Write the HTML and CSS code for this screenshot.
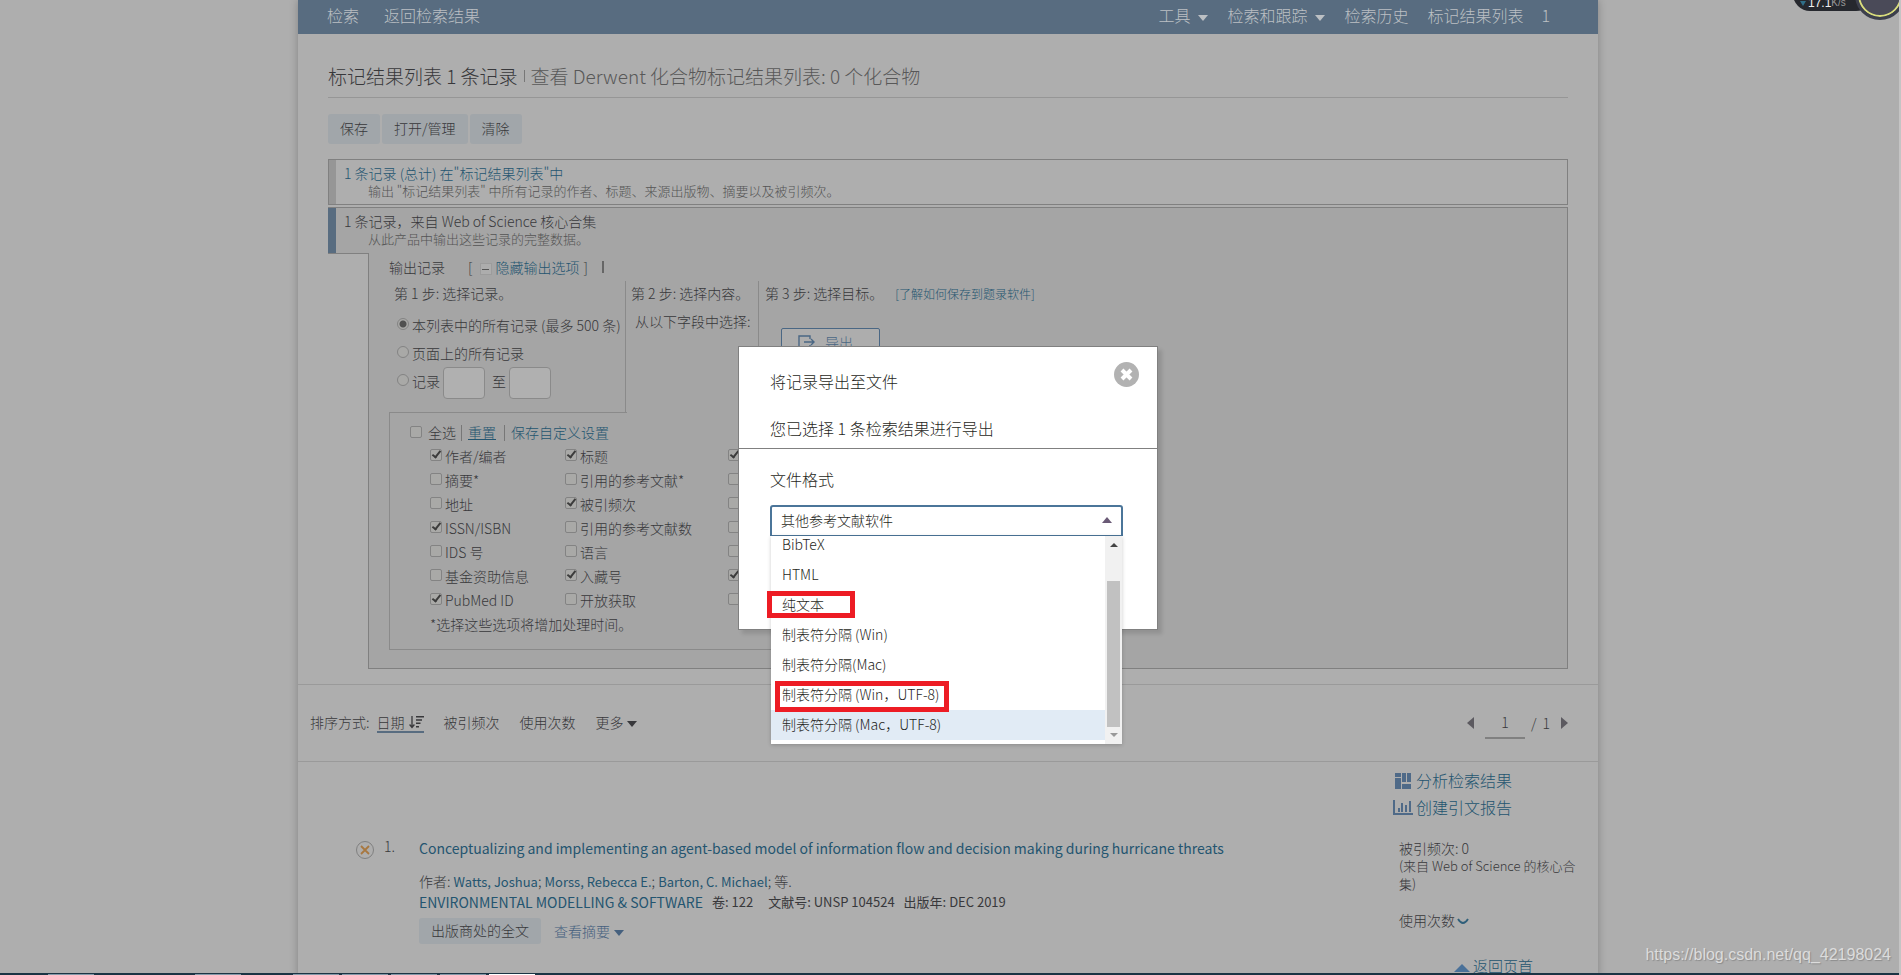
FILE: index.html
```html
<!DOCTYPE html>
<html lang="zh-CN">
<head>
<meta charset="utf-8">
<title>标记结果列表</title>
<link rel="stylesheet" href="styles.css">
</head>
<body>
<div class="viewport">
  <div class="page">
    <nav class="navbar">
      <div class="nav-left"><a href="#">检索</a><a href="#">返回检索结果</a></div>
      <div class="nav-right">
        <a href="#">工具<i class="caret"></i></a>
        <a href="#">检索和跟踪<i class="caret"></i></a>
        <a href="#">检索历史</a>
        <a href="#">标记结果列表<span class="count">1</span></a>
      </div>
    </nav>

    <main class="content">
      <h1 class="title"><span>标记结果列表 1 条记录</span><i class="bar"></i><a href="#">查看 Derwent 化合物标记结果列表: 0 个化合物</a></h1>
      <div class="actions">
        <button class="btn" type="button">保存</button>
        <button class="btn" type="button">打开/管理</button>
        <button class="btn" type="button">清除</button>
      </div>

      <section class="summary">
        <a href="#" class="summary-title">1 条记录 (总计) 在"标记结果列表"中</a>
        <p class="summary-note">输出 "标记结果列表" 中所有记录的作者、标题、来源出版物、摘要以及被引频次。</p>
      </section>

      <section class="source">
        <header class="source-head">
          <h2 class="summary-title">1 条记录，来自 Web of Science 核心合集</h2>
          <p class="summary-note">从此产品中输出这些记录的完整数据。</p>
        </header>
        <div class="source-row">
          <div class="notch"></div>
          <div class="output">
            <div class="output-head"><span>输出记录</span><span class="toggle">[ <i class="minus"></i><a href="#">隐藏输出选项</a> ]</span><i class="bar"></i></div>
            <div class="steps">
              <div class="step step-one">
                <h3>第 1 步: 选择记录。</h3>
                <label class="radio"><input type="radio" name="range" checked>本列表中的所有记录 (最多 500 条)</label>
                <label class="radio"><input type="radio" name="range">页面上的所有记录</label>
                <div class="radio"><input type="radio" name="range" id="range"><label for="range">记录</label><input class="num" type="text" aria-label="起始记录"><span class="to">至</span><input class="num" type="text" aria-label="结束记录"></div>
              </div>
              <div class="step step-two">
                <h3>第 2 步: 选择内容。</h3>
                <p>从以下字段中选择:</p>
              </div>
              <div class="step step-three">
                <h3>第 3 步: 选择目标。<a href="#">[了解如何保存到题录软件]</a></h3>
                <button class="export" type="button"><svg width="18" height="14" viewBox="0 0 18 14" fill="none" stroke="currentColor" stroke-width="1.4"><path d="M12 4V1H1v12h11v-3M6 7h10M13 4l3 3-3 3"/></svg>导出</button>
              </div>
            </div>
            <div class="fields">
              <div class="fields-head"><label><input type="checkbox">全选</label><a class="u" href="#">重置</a><a href="#">保存自定义设置</a></div>
              <div class="field-grid">
                <label><input type="checkbox" checked>作者/编者</label><label><input type="checkbox" checked>标题</label><input type="checkbox" checked aria-label="来源出版物">
                <label><input type="checkbox">摘要*</label><label><input type="checkbox">引用的参考文献*</label><input type="checkbox" aria-label="来源出版物缩写">
                <label><input type="checkbox">地址</label><label><input type="checkbox" checked>被引频次</label><input type="checkbox" aria-label="文献类型">
                <label><input type="checkbox" checked>ISSN/ISBN</label><label><input type="checkbox">引用的参考文献数</label><input type="checkbox" aria-label="关键词">
                <label><input type="checkbox">IDS 号</label><label><input type="checkbox">语言</label><input type="checkbox" aria-label="出版商信息">
                <label><input type="checkbox">基金资助信息</label><label><input type="checkbox" checked>入藏号</label><input type="checkbox" checked aria-label="会议信息">
                <label><input type="checkbox" checked>PubMed ID</label><label><input type="checkbox">开放获取</label><input type="checkbox" aria-label="研究方向">
              </div>
              <p class="fields-note">*选择这些选项将增加处理时间。</p>
            </div>
          </div>
        </div>
      </section>
    </main>

    <div class="sortbar">
      <div class="sort">
        <span class="sort-label">排序方式:</span>
        <a href="#" class="active">日期<svg width="15" height="13" viewBox="0 0 15 13"><path d="M3 0v11M0.600 8.500L3 11.500 5.400 8.500" fill="none" stroke="currentColor" stroke-width="1.300"/><path d="M7 0h8v1.500H7zM7 3.300h6v1.500H7zM7 6.600h4.500v1.500H7zM7 10h3v1.500H7z" fill="currentColor"/></svg></a>
        <a href="#">被引频次</a><a href="#">使用次数</a><a href="#">更多<i class="caret"></i></a>
      </div>
      <div class="pager">
        <button type="button" aria-label="上一页" class="prev"></button>
        <input type="text" value="1" aria-label="页码"><span>/</span><span>1</span>
        <button type="button" aria-label="下一页" class="next"></button>
      </div>
    </div>

    <div class="results">
      <article class="record">
        <button class="remove" type="button" aria-label="移除"><svg width="10" height="10" viewBox="0 0 10 10" stroke="currentColor" stroke-width="1.800"><path d="M1 1l8 8M9 1l-8 8"/></svg></button>
        <span class="num-label">1.</span>
        <div class="record-body">
          <a href="#" class="record-title">Conceptualizing and implementing an agent-based model of information flow and decision making during hurricane threats</a>
          <p class="authors">作者: <a href="#">Watts, Joshua</a>; <a href="#">Morss, Rebecca E.</a>; <a href="#">Barton, C. Michael</a>; 等.</p>
          <p class="journal"><a href="#">ENVIRONMENTAL MODELLING &amp; SOFTWARE</a><span>卷: 122</span><span class="wide">文献号: UNSP 104524</span><span>出版年: DEC 2019</span></p>
          <div class="record-actions"><button class="btn fulltext" type="button">出版商处的全文</button><a href="#">查看摘要<i class="caret"></i></a></div>
        </div>
      </article>
      <aside class="side">
        <a href="#" class="tool"><svg width="22" height="16" viewBox="0 0 22 16" fill="currentColor"><path d="M3 0h6v4H3zM3 5h6v11H3zM10 0h4v9h-4zM15 0h4v9h-4zM10 11h9v5h-9z"/></svg>分析检索结果</a>
        <a href="#" class="tool"><svg width="22" height="16" viewBox="0 0 22 16" fill="currentColor"><path d="M1 0h2v13h18v2H1zM6 8h2v4H6zM9 3h2v9H9zM13 5h2v7h-2zM17 1h2v11h-2z"/></svg>创建引文报告</a>
        <div class="cites">
          <p>被引频次: 0</p>
          <p class="from">(来自 Web of Science 的核心合集)</p>
          <a href="#" class="usage">使用次数<svg width="12" height="7" viewBox="0 0 12 7" fill="none" stroke="currentColor" stroke-width="1.800"><path d="M1 1q5 8 10 0"/></svg></a>
        </div>
        <a href="#" class="top"><i></i>返回页首</a>
      </aside>
    </div>
  </div>

  <div class="overlay">
    <div class="modal" role="dialog" aria-labelledby="dlg">
      <header class="modal-head">
        <h2 id="dlg">将记录导出至文件</h2>
        <p>您已选择 1 条检索结果进行导出</p>
        <button class="close" type="button" aria-label="关闭"><svg width="13" height="13" viewBox="0 0 13 13" stroke="#fff" stroke-width="4"><path d="M2 2l9 9M11 2l-9 9"/></svg></button>
      </header>
      <div class="modal-body">
        <h3>文件格式</h3>
        <div class="picker">
          <button class="picked" type="button" aria-haspopup="listbox">其他参考文献软件<i class="caret up"></i></button>
          <div class="menu">
            <ul role="listbox">
              <li role="option">BibTeX</li>
              <li role="option">HTML</li>
              <li role="option" class="mark-a">纯文本</li>
              <li role="option">制表符分隔 (Win)</li>
              <li role="option">制表符分隔(Mac)</li>
              <li role="option" class="mark-b">制表符分隔 (Win，UTF-8)</li>
              <li role="option" class="hover">制表符分隔 (Mac，UTF-8)</li>
            </ul>
            <div class="scroll"><i class="arrow-up"></i><i class="thumb"></i><i class="arrow-down"></i></div>
          </div>
        </div>
      </div>
    </div>
  </div>

  <div class="gadget">
    <div class="speed"><i></i>17.1<small>K/s</small></div>
    <div class="dial"></div>
  </div>
  <div class="watermark">https://blog.csdn.net/qq_42198024</div>
  <div class="taskbar"><i style="left:48px"></i><i style="left:195px"></i><i style="left:293px"></i><i style="left:342px"></i><i style="left:391px"></i><i style="left:440px"></i><i class="on" style="left:489px"></i></div>
</div>
</body>
</html>
```

FILE: styles.css
```css
*, *::before, *::after { box-sizing: border-box; }
body, h1, h2, h3, p, ul { margin: 0; padding: 0; font-weight: inherit; }
ul { list-style: none; }
body {
  font: 300 14px/20px "Noto Sans CJK SC", sans-serif;
  color: #38383b;
  background: #aeaeae;
}
a { color: #245570; text-decoration: none; }
button, input { font: inherit; color: inherit; margin: 0; }
button { border: 0; background: none; padding: 0; }
.viewport {
  position: relative;
  height: 100vh;
  overflow: hidden;
  padding-right: 3px;
  border-right: 2px solid #c4c4c4;
}
.page {
  max-width: 1300px;
  margin: 0 auto;
  min-height: 100%;
  box-shadow: 0 0 8px rgba(0, 0, 0, .25);
}

.caret {
  display: inline-block;
  border: 5px solid transparent;
  border-top: 6px solid currentColor;
  border-bottom: 0;
  margin-left: 3px;
  vertical-align: 1px;
}
.caret.up { border-top: 0; border-bottom: 6px solid #6a5a76; }

.navbar {
  display: flex;
  justify-content: space-between;
  height: 34px;
  padding: 0 48px 0 29px;
  background: #586c80;
  font-size: 16px;
  line-height: 30px;
}
.navbar a { color: #bcc0c4; }
.nav-left { display: flex; gap: 25px; }
.nav-right { display: flex; gap: 19px; }
.nav-right .caret { margin-left: 8px; }
.count { margin-left: 18px; }

.content { padding: 27px 30px 15px; border-bottom: 1px solid #9a9a9a; }
.title {
  display: flex;
  align-items: center;
  font-size: 19px;
  line-height: 30px;
  padding-bottom: 6px;
  border-bottom: 1px solid #969696;
}
.title a { color: #585858; }
.title .bar { width: 1px; height: 12px; margin: 0 6px; background: #777; }
.actions { display: flex; gap: 2px; padding: 16px 0 15px; }
.btn {
  padding: 0 12px 2px;
  line-height: 28px;
  border-radius: 3px;
  background: #a1a6aa;
}

.summary {
  padding: 3px 0 2px 8px;
  border: 1px solid #808080;
  border-left-width: 0;
  box-shadow: inset 1px 0 #808080, inset 8px 0 #969696;
  margin-bottom: 2px;
  height: 46px;
}
.summary-title { display: block; padding-left: 8px; font-size: 14px; line-height: 20px; }
.summary-note { padding-left: 32px; font-size: 13px; line-height: 16px; color: #545454; }
.source {
  background: #a5a5a5;
  border-top: 1px solid #808080;
  border-right: 1px solid #808080;
}
.source-head {
  padding: 3px 0 4px;
  border-left: 8px solid #586c80;
  height: 45px;
}
.source-row { display: flex; }
.notch { width: 40px; flex: none; background: #aeaeae; border-top: 1px solid #808080; }
.output {
  flex: 1;
  padding: 3px 0 18px 20px;
  border: 1px solid #808080;
  border-top: 0;
  border-right: 0;
}
.output-head { display: flex; align-items: center; line-height: 22px; }
.toggle { margin-left: 23px; }
.toggle a { margin-right: 1px; }
.minus {
  display: inline-block;
  width: 12px;
  height: 12px;
  margin: 0 4px;
  vertical-align: -2px;
  border: 1px solid #9c9c9c;
  background: linear-gradient(#555, #555) center / 7px 1px no-repeat #adadad;
}
.output-head .bar { width: 2px; height: 12px; background: #666; margin-left: 14px; }
.steps { display: flex; height: 131px; margin-top: 3px; }
.step { border-right: 1px solid #8a8a8a; }
.step h3 { font-size: 14px; line-height: 24px; }
.step-one { width: 237px; padding-left: 5px; flex: none; }
.step-two { width: 133px; padding-left: 5px; flex: none; }
.step-two p { padding: 5px 0 0 4px; line-height: 22px; white-space: nowrap; }
.step-three { border: 0; padding-left: 6px; }
.step-three a { font-size: 12px; margin-left: 12px; }
.radio { display: flex; align-items: center; height: 28px; white-space: nowrap; }
.step-one h3 { margin-bottom: 6px; }

input[type="radio"], input[type="checkbox"] {
  appearance: none;
  flex: none;
  width: 12px;
  height: 12px;
  border: 1px solid #838383;
  background: #a9a9a7;
  margin: 0 3px 2px 0;
}
input[type="radio"] { border-radius: 50%; margin-left: 3px; }
input[type="radio"]:checked { background: radial-gradient(circle, #505050 0 3px, #a9a9a7 4px); }
input[type="checkbox"] { border-radius: 2px; position: relative; }
input[type="checkbox"]:checked::after {
  content: "";
  position: absolute;
  left: 3px;
  top: -1px;
  width: 5px;
  height: 9px;
  border: solid #3c3c3c;
  border-width: 0 2px 2px 0;
  transform: rotate(38deg);
}
.num {
  width: 42px;
  height: 32px;
  border: 1px solid #8a8a8a;
  border-radius: 4px;
  background: #b0b0b0;
  margin: 3px 0 0 3px;
}
.to { margin: 0 0 0 7px; }
.export {
  display: flex;
  align-items: center;
  gap: 9px;
  width: 99px;
  height: 32px;
  margin: 22px 0 0 16px;
  padding: 0 16px 5px;
  font-size: 14px;
  color: #4a6784;
  border: 1px solid #4a6784;
  border-radius: 2px;
  background: #adadad;
}

.fields {
  position: relative;
  width: 600px;
  padding: 8px 0 13px 40px;
  border: 1px solid #8a8a8a;
  border-top-color: transparent;
}
.fields::before {
  content: "";
  position: absolute;
  left: -1px;
  top: -1px;
  width: 238px;
  border-top: 1px solid #8a8a8a;
}
.fields-head { display: flex; line-height: 23px; margin-left: -20px; }
.fields-head label { display: flex; align-items: center; }
.fields-head input[type="checkbox"] { margin-right: 6px; }
.fields-head a {
  background: linear-gradient(#777, #777) left center / 1px 16px no-repeat;
  margin-left: 5px;
  padding-left: 7px;
}
.fields-head .u { margin-right: 3px; }
.fields-head .u { text-decoration: underline; }
.field-grid {
  display: grid;
  grid-template-columns: 135px 163px 1fr;
  grid-auto-rows: 24px;
  align-items: center;
}
.field-grid label { display: flex; align-items: center; white-space: nowrap; }
.fields-note { line-height: 24px; }

.sortbar {
  display: flex;
  justify-content: space-between;
  align-items: center;
  height: 77px;
  padding: 0 30px 0 12px;
  border-bottom: 1px solid #9a9a9a;
}
.sort { display: flex; gap: 20px; line-height: 18px; }
.sort a { color: inherit; }
.sort .sort-label { margin-right: -13px; }
.sort .active { border-bottom: 2px solid #586c80; }
.sort svg { margin-left: 4px; vertical-align: -1px; }
.pager { display: flex; align-items: center; gap: 6px; }
.pager input {
  width: 40px;
  height: 30px;
  margin: 2px 0 0 5px;
  padding: 0 0 2px;
  border: 0;
  border-bottom: 2px solid #808080;
  background: none;
  text-align: center;
}
.pager button { width: 0; height: 0; border: 6px solid transparent; }
.pager .prev { border-width: 6px 7px 6px 0; border-right-color: #5c5a60; }
.pager .next { border-width: 6px 0 6px 7px; border-left-color: #5c5a60; margin-left: 5px; }

.results { display: flex; justify-content: space-between; }
.record { display: flex; padding: 74px 0 0 58px; }
.remove {
  display: flex;
  align-items: center;
  justify-content: center;
  width: 18px;
  height: 18px;
  margin-top: 5px;
  border: 1px solid #808080;
  border-radius: 50%;
  color: #a87840;
}
.num-label { width: 45px; padding-left: 10px; line-height: 20px; }
.record-title { display: block; font-size: 14px; font-weight: 400; line-height: 24px; white-space: nowrap; }
.authors { margin-top: 11px; }
.authors a { font-size: 13px; font-weight: 400; }
.journal { display: flex; }
.journal a { font-weight: 400; }
.journal span { margin-left: 9px; font-size: 13px; font-weight: 400; }
.journal .wide { margin-left: 15px; }
.record-actions { display: flex; align-items: center; gap: 13px; margin-top: 6px; }
.record-actions .btn { line-height: 24px; }
.record-actions a { color: #45607e; }
.record-actions .caret { margin-left: 4px; }
.side { width: 206px; padding: 5px 20px 0 0; flex: none; }
.tool { display: flex; align-items: center; gap: 2px; font-size: 16px; line-height: 27px; }
.tool svg { color: #4f6a88; }
.cites { padding: 18px 0 0 7px; line-height: 18px; }
.from { font-size: 13px; }
.usage { display: inline-block; margin-top: 18px; color: inherit; }
.usage svg { color: #2f5f7a; margin-left: 2px; vertical-align: 1px; }
.top { display: flex; align-items: center; gap: 3px; margin: 25px 0 0 62px; font-size: 15px; line-height: 24px; }
.top i { border: 8px solid transparent; border-bottom-color: #4a7199; margin-top: -4px; }

.overlay {
  position: absolute;
  inset: 0 3px auto 0;
  display: flex;
  justify-content: center;
  padding-top: 346px;
}
.modal {
  width: 420px;
  color: #1f1f22;
  background: #fff;
  border: 1px solid #808080;
  box-shadow: 4px 4px 4px rgba(0, 0, 0, .12);
  font-size: 16px;
}
.modal-head { position: relative; padding: 22px 31px 8px; border-bottom: 1px solid #808080; }
.modal-head p { margin-top: 23px; line-height: 24px; }
.modal-head h2 { font-size: 16px; line-height: 24px; }
.close {
  position: absolute;
  right: 18px;
  top: 15px;
  display: flex;
  align-items: center;
  justify-content: center;
  width: 25px;
  height: 25px;
  border-radius: 50%;
  background: #b2b2b2;
}
.modal-body { padding: 18px 34px 93px 31px; }
.modal-body h3 { font-size: 16px; line-height: 24px; margin-bottom: 14px; }
.picker { position: relative; font-size: 14px; }
.picked {
  display: flex;
  align-items: center;
  justify-content: space-between;
  width: 100%;
  height: 31px;
  padding: 0 9px 2px;
  border: 2px solid #4b7599;
  border-bottom-width: 1px;
  border-radius: 3px 3px 0 0;
}
.menu {
  position: absolute;
  top: 100%;
  left: 1px;
  right: 1px;
  display: flex;
  height: 208px;
  background: #fff;
  box-shadow: 0 1px 4px rgba(0, 0, 0, .2);
}
.menu ul { flex: 1; margin-top: -6px; }
.menu li { position: relative; padding: 0 0 1px 11px; line-height: 29px; }
.menu .hover { background: #e1ebf5; }
.mark-a::after, .mark-b::after {
  content: "";
  position: absolute;
  z-index: 1;
  border: 5px solid #ed1c24;
}
.mark-a::after { left: -4px; top: 1px; width: 88px; height: 27px; }
.mark-b::after { left: 4px; top: 1px; width: 174px; height: 31px; }
.scroll {
  display: flex;
  flex-direction: column;
  align-items: center;
  width: 17px;
  background: #f1f1f1;
}
.thumb { width: 13px; flex: 1; background: #c1c1c1; }
.arrow-up, .arrow-down { border: 4px solid transparent; }
.arrow-up { border-top: 0; border-bottom-color: #444; margin: 7px 0 34px; }
.arrow-down { border-bottom: 0; border-top-color: #999; margin: 6px 0 7px; }

.gadget { position: absolute; right: -6px; top: -30px; width: 112px; height: 50px; }
.speed {
  position: absolute;
  left: 0;
  bottom: 9px;
  width: 80px;
  height: 34px;
  padding: 18px 0 0 7px;
  border-radius: 17px;
  background: #26282e;
  color: #eee;
  font: 12px/16px "Liberation Sans", sans-serif;
  display: flex;
}
.speed small { font-size: 10px; color: #999; }
.speed i { border: 3px solid transparent; border-top: 5px solid #2f6e88; margin: 6px 2px 0 0; height: 0; }
.dial {
  position: absolute;
  right: 0;
  top: 0;
  width: 50px;
  height: 50px;
  border-radius: 50%;
  border: 3px solid #3c3f4c;
  background: #4a4a58;
  box-shadow: inset 0 0 0 2px #d8dc7c;
}
.watermark {
  position: absolute;
  right: 8px;
  bottom: 11px;
  font: 16px/18px "Liberation Sans", sans-serif;
  color: #dcdcdc;
  text-shadow: 1px 1px 1px #8c8c8c;
}
.taskbar { position: absolute; left: 0; right: -2px; bottom: 0; height: 2px; background: #1b3444; }
.taskbar i { position: absolute; bottom: 0; width: 46px; height: 1px; background: #8499a8; }
.taskbar .on { background: #fff; }
```
